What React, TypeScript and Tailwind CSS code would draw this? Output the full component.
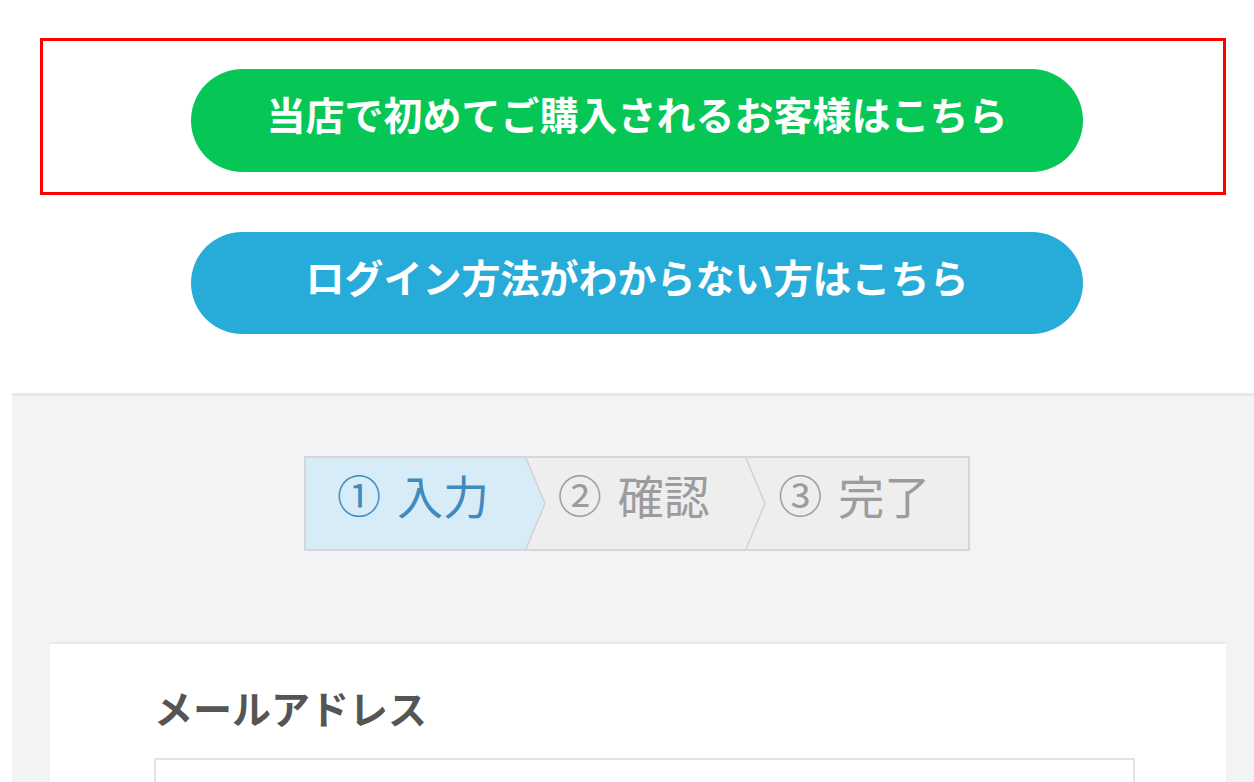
const STEPS = [
  { num: "①", word: "入力", active: true },
  { num: "②", word: "確認", active: false },
  { num: "③", word: "完了", active: false },
];

function StepBar() {
  return (
    <div className="flex h-[95px] w-[666px] border-2 border-[#d6d6d6]">
      {STEPS.map((s, i) => (
        <div
          key={s.word}
          className={`relative flex flex-1 items-center gap-[16px] pb-[20px] pl-[31px] text-[46px] leading-none ${
            s.active ? "bg-[#d8ecf7] text-[#3f8bbd]" : "bg-[#eeeeee] text-[#9c9c9c]"
          }`}
        >
          <span className="text-[44px]">{s.num}</span>
          <span>{s.word}</span>
          {i < STEPS.length - 1 && (
            <svg
              className="absolute top-0 right-[-20px] z-10 h-full w-[22px]"
              viewBox="0 0 22 91"
              preserveAspectRatio="none"
            >
              <polygon
                points="0,0 1,0 20,45.5 1,91 0,91"
                fill={s.active ? "#d8ecf7" : "#eeeeee"}
              />
              <polyline
                points="1,0 20,45.5 1,91"
                fill="none"
                stroke="#d2d2d2"
                strokeWidth="1.5"
              />
            </svg>
          )}
        </div>
      ))}
    </div>
  );
}

export default function App() {
  return (
    <div className="h-[782px] w-full overflow-hidden bg-white font-['Noto_Sans_CJK_JP','Noto_Sans',sans-serif]">
      <div className="ml-[40px] mt-[38px] h-[157px] w-[1186px] border-[3px] border-[#ff0000] pl-[148px] pt-[28px]">
        <button className="flex h-[103px] w-[892px] items-center justify-center rounded-full bg-[#06c755] pb-[14px] text-[39px] font-bold leading-none text-white">
          当店で初めてご購入されるお客様はこちら
        </button>
      </div>

      <button className="ml-[191px] mt-[37px] flex h-[102px] w-[892px] items-center justify-center rounded-full bg-[#27acd9] pb-[14px] text-[39px] font-bold leading-none text-white">
        ログイン方法がわからない方はこちら
      </button>

      <section className="ml-[12px] mt-[59px] h-[400px] border-t-[3px] border-[#e6e7e9] bg-[#f2f3f5] pt-[60px]">
        <div className="ml-[292px]">
          <StepBar />
        </div>

        <div className="ml-[38px] mt-[91px] h-[300px] w-[1176px] border-t-2 border-[#e8e9eb] bg-white pl-[104px] pt-[44px]">
          <h2 className="text-[39px] font-bold leading-none text-[#555555]">メールアドレス</h2>
          <div className="mt-[31px] h-[80px] w-[981px] border-2 border-[#e3e3e3] bg-white" />
        </div>
      </section>
    </div>
  );
}
